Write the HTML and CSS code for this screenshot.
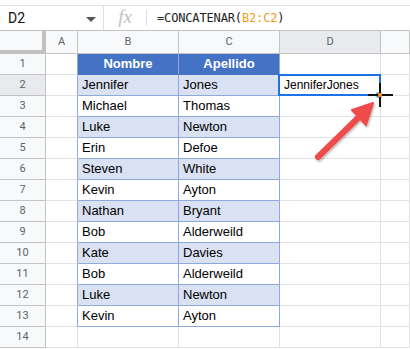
FILE: index.html
```html
<!DOCTYPE html>
<html lang="es">
<head>
    <meta charset="UTF-8">
    <title>CONCATENAR</title>
    <link rel="stylesheet" href="styles.css">
</head>
<body>
    <div class="formula-bar">
        <div class="name-box">
            <span>D2</span>
            <span class="caret"></span>
        </div>
        <div class="fx">fx</div>
        <div class="formula">=CONCATENAR(<span class="ref">B2:C2</span>)</div>
    </div>

    <div class="sheet" id="sheet"></div>

    <!-- arrow and cursor sit on top of the grid -->
    <svg class="overlay" width="410" height="349" viewBox="0 0 410 349">
        <defs>
            <filter id="shadow" x="-20%" y="-20%" width="140%" height="140%">
                <feDropShadow dx="1" dy="1.5" stdDeviation="1.2" flood-color="#000" flood-opacity="0.3"/>
            </filter>
        </defs>
        <g filter="url(#shadow)">
            <line x1="318" y1="157" x2="362" y2="114" stroke="#f04b4b" stroke-width="6" stroke-linecap="round"/>
            <polygon points="373,103 352,110 366,125" fill="#f04b4b" stroke="#f04b4b" stroke-width="2" stroke-linejoin="round"/>
        </g>
        <rect x="376" y="92" width="6" height="6" fill="#1a73e8" stroke="#fff" stroke-width="1"/>
        <rect x="368" y="94" width="25" height="2" fill="#111"/>
        <rect x="379" y="83" width="2" height="24" fill="#111"/>
        <rect x="378" y="93" width="4" height="4" fill="#e8902a"/>
    </svg>

    <script src="script.js"></script>
</body>
</html>
```

FILE: script.js
```js
const rows = [
    ['Nombre', 'Apellido'],
    ['Jennifer', 'Jones'],
    ['Michael', 'Thomas'],
    ['Luke', 'Newton'],
    ['Erin', 'Defoe'],
    ['Steven', 'White'],
    ['Kevin', 'Ayton'],
    ['Nathan', 'Bryant'],
    ['Bob', 'Alderweild'],
    ['Kate', 'Davies'],
    ['Bob', 'Alderweild'],
    ['Luke', 'Newton'],
    ['Kevin', 'Ayton'],
    null
];

const sheet = document.getElementById('sheet');

function cell(cls, text) {
    const div = document.createElement('div');
    div.className = 'cell ' + cls;
    if (text) div.textContent = text;
    sheet.appendChild(div);
    return div;
}

// column headers
cell('corner');
['A', 'B', 'C', 'D', ''].forEach(letter => {
    cell('col-head' + (letter === 'D' ? ' active' : ''), letter);
});

rows.forEach((row, i) => {
    const num = i + 1;
    cell('row-head' + (num === 2 ? ' active' : ''), String(num));

    // empty last row
    if (!row) {
        for (let c = 0; c < 5; c++) cell('');
        return;
    }

    cell('edge');
    if (num === 1) {
        cell('tbl head', row[0]);
        cell('tbl head', row[1]);
    } else {
        const band = num % 2 === 0 ? ' band' : '';
        cell('tbl' + band, row[0]);
        cell('tbl' + band, row[1]);
    }

    if (num === 2) {
        cell('selected', 'JenniferJones');
    } else {
        cell('');
    }
    cell('');
});
```

FILE: styles.css
```css
* {
    margin: 0;
    padding: 0;
    box-sizing: border-box;
}

body {
    width: 410px;
    height: 349px;
    overflow: hidden;
    background: #fff;
    font-family: 'Liberation Sans', Arial, sans-serif;
    color: #000;
    position: relative;
}

.formula-bar {
    display: flex;
    align-items: center;
    height: 26px;
    margin-top: 5px;
    border-top: 1px solid #e3e3e3;
    border-bottom: 1px solid #c4c4c4;
}

.name-box {
    width: 104px;
    height: 100%;
    display: flex;
    align-items: center;
    justify-content: space-between;
    padding: 0 7px 0 8px;
    font-family: Roboto, 'Liberation Sans', sans-serif;
    font-size: 14px;
    color: #111;
    border-right: 1px solid #e0e0e0;
}

.caret {
    width: 0;
    height: 0;
    border-left: 5px solid transparent;
    border-right: 5px solid transparent;
    border-top: 5px solid #555;
    margin-top: 2px;
}

.fx {
    width: 43px;
    height: 16px;
    text-align: center;
    font-family: 'Liberation Serif', serif;
    font-style: italic;
    font-size: 19px;
    line-height: 14px;
    color: #c2c2c2;
    border-right: 1px solid #e0e0e0;
}

.formula {
    padding-left: 10px;
    font-family: 'DejaVu Sans Mono', monospace;
    font-size: 12px;
    color: #222;
    letter-spacing: -0.15px;
}

.ref {
    color: #f39a21;
}

.sheet {
    display: grid;
    grid-template-columns: 46px 32px 101px 101px 101px 29px;
    grid-template-rows: 23px repeat(14, 21px);
}

.cell {
    border-right: 1px solid #e2e2e2;
    border-bottom: 1px solid #e2e2e2;
    font-size: 13px;
    line-height: 20px;
    padding-left: 4px;
    white-space: nowrap;
    overflow: hidden;
}

.corner {
    background: #f8f9fa;
    border-right: 4px solid #c0c0c0;
    border-bottom: 4px solid #c0c0c0;
}

.col-head {
    background: #f8f9fa;
    border-right-color: #c4c4c4;
    border-bottom-color: #c4c4c4;
    text-align: center;
    padding-left: 0;
    font-family: Roboto, 'Liberation Sans', sans-serif;
    font-size: 11px;
    line-height: 22px;
    color: #5f6368;
}

.row-head {
    background: #f8f9fa;
    border-right-color: #c4c4c4;
    border-bottom-color: #c4c4c4;
    text-align: center;
    padding-left: 0;
    font-family: Roboto, 'Liberation Sans', sans-serif;
    font-size: 11px;
    color: #5f6368;
}

.col-head.active,
.row-head.active {
    background: #e8eaed;
}

.edge {
    border-right-color: #8eaadb;
}

.tbl {
    border-right-color: #8eaadb;
    border-bottom-color: #8eaadb;
}

.tbl.band {
    background: #d9e1f2;
}

.tbl.head {
    background: #4472c4;
    color: #fff;
    font-weight: bold;
    text-align: center;
    padding-left: 0;
    border-bottom-color: #4472c4;
}

.selected {
    position: relative;
    overflow: visible;
    font-size: 12px;
}

.selected::after {
    content: '';
    position: absolute;
    left: -2px;
    top: -1px;
    right: -1px;
    bottom: -1px;
    border: 2px solid #1a73e8;
}

.overlay {
    position: absolute;
    left: 0;
    top: 0;
}
```
